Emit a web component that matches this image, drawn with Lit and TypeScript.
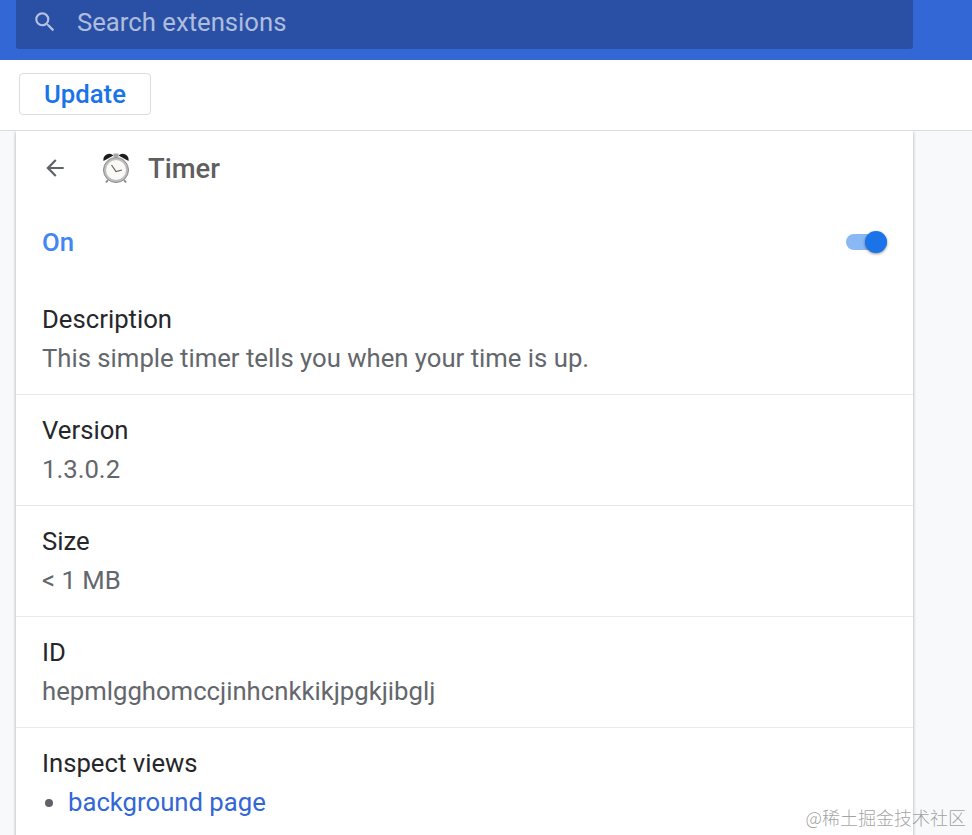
import { LitElement, html, css } from "lit";
import { customElement } from "lit/decorators.js";

@customElement("app-root")
export class AppRoot extends LitElement {
  static styles = css`
    :host { display: block; height: 835px; overflow: hidden; position: relative; background: #f8f9fa; font-family: Roboto, sans-serif; }
    .top { height: 60px; background: #3367d6; padding: 0 59px 0 16px; box-sizing: border-box; }
    .search { height: 49px; background: #2a50a6; border-radius: 0 0 3px 3px; display: flex; align-items: center; color: rgba(255,255,255,.63); font-size: 25.7px; padding-bottom: 6px; box-sizing: border-box; }
    .search svg { width: 26px; height: 26px; margin-left: 16px; margin-right: 19px; fill: rgba(255,255,255,.65); }
    .bar { position: relative; z-index: 1; height: 71px; background: #fff; border-bottom: 1px solid #dadce0; box-sizing: border-box; padding: 13px 19px; }
    .btn { width: 132px; height: 42px; box-sizing: border-box; border: 1px solid #dadce0; border-radius: 4px; color: #1a73e8; font-size: 25.7px; font-weight: 500; display: flex; align-items: center; justify-content: center; background: #fff; }
    .card { margin: 0 59px 0 16px; background: #fff; box-shadow: 0 1px 3px rgba(60,64,67,.3), 0 1px 4px rgba(60,64,67,.15); }
    .head { height: 75px; display: flex; align-items: center; padding-left: 26px; color: #5f6368; }
    .head .back { width: 26px; height: 26px; fill: #5f6368; margin-bottom: 2px; }
    .head .clock { width: 32px; height: 32px; margin-left: 32px; margin-bottom: 2px; }
    .head .title { margin-left: 16px; font-size: 27.4px; font-weight: 500; color: #5f5f5f; }
    .on { height: 72px; margin-bottom: 6px; display: flex; align-items: center; justify-content: space-between; padding: 0 26px; color: #4285f4; font-size: 25.7px; font-weight: 500; box-sizing: border-box; }
    .toggle { position: relative; width: 41px; height: 16px; border-radius: 8px; background: #8ab8f5; }
    .knob { position: absolute; right: 0; top: -3px; width: 22px; height: 22px; border-radius: 50%; background: #1a73e8; box-shadow: 0 1px 3px rgba(0,0,0,.45); }
    .row { padding: 16px 26px; line-height: 39px; font-size: 25.7px; color: #26272a; border-bottom: 1px solid #e8eaed; height: 111px; box-sizing: border-box; }
    .val { color: #63676c; }
    .row:last-child { border-bottom: 0; }
    .li { display: flex; align-items: center; }
    .dot { width: 8px; height: 8px; border-radius: 50%; background: #5f6368; margin-left: 3px; margin-right: 15px; }
    .link { color: #3367d6; }
    .mark { position: absolute; right: 6px; top: 805px; font-size: 18px; line-height: 24px; color: rgba(120,120,120,.7); font-family: "Noto Sans CJK SC", "Liberation Serif", serif; font-weight: 300; }
  `;

  private rows: [string, string][] = [
    ["Version", "1.3.0.2"],
    ["Size", "< 1 MB"],
    ["ID", "hepmlgghomccjinhcnkkikjpgkjibglj"],
  ];

  render() {
    return html`
      <div class="top">
        <div class="search">
          <svg viewBox="0 0 24 24"><path d="M15.5 14h-.79l-.28-.27A6.47 6.47 0 0 0 16 9.5 6.5 6.5 0 1 0 9.5 16c1.61 0 3.09-.59 4.23-1.57l.27.28v.79l5 4.99L20.49 19l-4.99-5zm-6 0C7.01 14 5 11.99 5 9.5S7.01 5 9.5 5 14 7.01 14 9.5 11.99 14 9.5 14z"/></svg>
          <span>Search extensions</span>
        </div>
      </div>
      <div class="bar"><div class="btn">Update</div></div>
      <div class="card">
        <div class="head">
          <svg class="back" viewBox="0 0 24 24"><path d="M20 11H7.83l5.59-5.59L12 4l-8 8 8 8 1.41-1.41L7.83 13H20v-2z"/></svg>
          <svg class="clock" viewBox="0 0 32 32">
            <path d="M3.5 9a6 6 0 0 1 10-5.5zM28.5 9a6 6 0 0 0-10-5.5z" fill="#1c1c1c"/>
            <rect x="13.5" y="1.5" width="5" height="3.5" fill="#a8a8a8"/>
            <path d="M8 28l-2 2.5M24 28l2 2.5" stroke="#8a8a8a" stroke-width="2"/>
            <circle cx="16" cy="18" r="12.5" fill="#bcbcbc" stroke="#8c8c8c" stroke-width="1"/>
            <circle cx="16" cy="18" r="10" fill="#faf9f6"/>
            <path d="M11.5 13l4.5 6.5 6-1.5" fill="none" stroke="#666" stroke-width="1.2"/>
          </svg>
          <span class="title">Timer</span>
        </div>
        <div class="on"><span>On</span><div class="toggle"><div class="knob"></div></div></div>
        <div class="row">Description<div class="val">This simple timer tells you when your time is up.</div></div>
        ${this.rows.map(([k, v]) => html`<div class="row">${k}<div class="val">${v}</div></div>`)}
        <div class="row">Inspect views<div class="li"><span class="dot"></span><span class="link">background page</span></div></div>
      </div>
      <div class="mark">@稀土掘金技术社区</div>
    `;
  }
}
